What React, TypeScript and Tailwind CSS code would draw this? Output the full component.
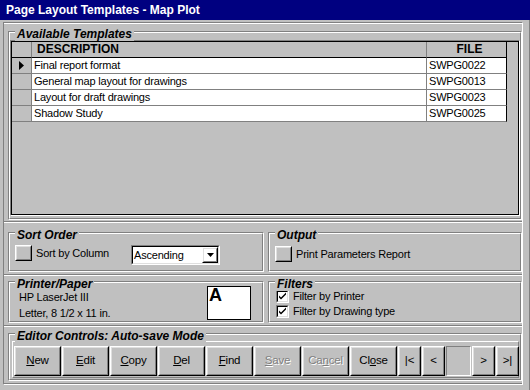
import React from "react";

const etchOuter = "border border-t-[#808080] border-l-[#808080] border-r-white border-b-white";
const etchInner = "border border-t-white border-l-white border-r-[#808080] border-b-[#808080]";
const raisedOuter = "border border-t-white border-l-white border-r-black border-b-black";
const raisedInner = "border border-t-[#dfdfdf] border-l-[#dfdfdf] border-r-[#808080] border-b-[#808080]";
const sunkOuter = "border border-t-[#808080] border-l-[#808080] border-r-white border-b-white";
const sunkInner = "border border-t-black border-l-black border-r-[#dfdfdf] border-b-[#dfdfdf]";

function Group({ label, className = "", children }: { label: string; className?: string; children?: React.ReactNode }) {
  return (
    <div className={`relative ${etchOuter} ${className}`}>
      <div className={`h-full ${etchInner}`}>{children}</div>
      <span className="absolute left-[6px] -top-[5px] bg-[#c0c0c0] px-[2px] text-[12px] leading-[14px] font-bold italic tracking-normal whitespace-nowrap">
        {label}
      </span>
    </div>
  );
}

function SquareButton() {
  return (
    <div className={`w-[17px] h-[16px] shrink-0 ${raisedOuter}`}>
      <div className={`h-full ${raisedInner}`} />
    </div>
  );
}

function CheckBox() {
  return (
    <div className={`w-[13px] h-[13px] shrink-0 ${sunkOuter}`}>
      <div className={`h-full bg-white ${sunkInner} flex items-center justify-center`}>
        <svg width="9" height="9" viewBox="0 0 9 9">
          <path d="M1 3.5 L1 5.5 L3 7.5 L8 2.5 L8 0.5 L3 5.5 Z" fill="black" />
        </svg>
      </div>
    </div>
  );
}

function Btn({ children, w = "w-[47px]", disabled = false }: { children: React.ReactNode; w?: string; disabled?: boolean }) {
  return (
    <div className={`${w} h-[30px] shrink-0 ${raisedOuter}`}>
      <div
        className={`h-full ${raisedInner} flex items-center justify-center text-[11.5px] ${
          disabled ? "text-[#808080] [text-shadow:1px_1px_0_#fff]" : "text-black"
        }`}
      >
        {children}
      </div>
    </div>
  );
}

const rows = [
  ["Final report format", "SWPG0022"],
  ["General map layout for drawings", "SWPG0013"],
  ["Layout for draft drawings", "SWPG0023"],
  ["Shadow Study", "SWPG0025"],
];

export default function App() {
  return (
    <div className="w-[530px] h-[390px] bg-[#c0c0c0] flex flex-col overflow-hidden font-['Liberation_Sans',Arial,sans-serif] text-[11px] text-black tracking-[-0.2px]">
      <div className="h-[20px] shrink-0 bg-[#000080] text-white font-bold text-[12px] tracking-normal flex items-center pl-[6px]">
        Page Layout Templates - Map Plot
      </div>
      <div className="flex-1 flex flex-col pt-[2px] pl-[3px] pr-[6px] pb-[5px] border-r border-r-[#808080]">
        <div className="flex-1 flex flex-col border border-t-[#808080] border-l-[#808080] border-r-white border-b-white">
          {/* Section 1 */}
          <div className="h-[199px] shrink-0 border-t border-t-white border-b border-b-[#808080] pl-[4px] flex flex-col">
            <Group label="Available Templates" className="mt-[7px] h-[189px]">
              <div className={`mt-[7px] h-[176px] ${sunkOuter}`}>
                <div className="h-full border border-black bg-[#c0c0c0] flex flex-col">
                  <div className="flex h-[16px] shrink-0">
                    <div className="w-[20px] border-r border-r-[#808080] border-b border-b-black" />
                    <div className="w-[395px] border-r border-r-[#808080] border-b border-b-black pl-[5px] font-bold text-[12px] tracking-normal leading-[15px]">
                      DESCRIPTION
                    </div>
                    <div className="w-[80px] border-r border-r-black border-b border-b-black text-center pl-[6px] font-bold text-[12px] tracking-normal leading-[15px]">
                      FILE
                    </div>
                  </div>
                  {rows.map(([d, f], i) => (
                    <div key={f} className="flex h-[16px] shrink-0">
                      <div className="w-[20px] border-r border-r-[#808080] border-b border-b-[#808080] flex items-center justify-center">
                        {i === 0 && (
                          <svg width="5" height="9" viewBox="0 0 5 9">
                            <path d="M0 0 L5 4.5 L0 9 Z" fill="black" />
                          </svg>
                        )}
                      </div>
                      <div className="w-[395px] bg-white border-r border-r-[#808080] border-b border-b-[#808080] pl-[2px] leading-[15px] whitespace-nowrap">
                        {d}
                      </div>
                      <div className="w-[80px] bg-white border-r border-r-black border-b border-b-[#808080] pl-[2px] leading-[15px]">
                        {f}
                      </div>
                    </div>
                  ))}
                </div>
              </div>
            </Group>
          </div>

          {/* Section 2 */}
          <div className="h-[53px] shrink-0 border-t border-t-white border-b border-b-[#808080] pl-[4px] flex gap-[4px]">
            <Group label="Sort Order" className="mt-[9px] h-[40px] w-[256px]">
              <div className="flex items-start pl-[5px] pt-[11px]">
                <SquareButton />
                <div className="w-[99px] pl-[4px] leading-[16px] h-[16px] shrink-0">Sort by Column</div>
                <div className={`w-[89px] h-[20px] shrink-0 ${sunkOuter}`}>
                  <div className={`h-full bg-white ${sunkInner} flex`}>
                    <div className="flex-1 pl-[1px] leading-[16px]">Ascending</div>
                    <div className={`w-[16px] h-[16px] ${raisedOuter}`}>
                      <div className={`h-full ${raisedInner} flex items-center justify-center`}>
                        <svg width="7" height="4" viewBox="0 0 7 4">
                          <path d="M0 0 L7 0 L3.5 4 Z" fill="black" />
                        </svg>
                      </div>
                    </div>
                  </div>
                </div>
              </div>
            </Group>
            <Group label="Output" className="mt-[9px] h-[40px] flex-1">
              <div className="flex items-center pl-[5px] pt-[12px]">
                <SquareButton />
                <div className="pl-[4px] leading-[16px]">Print Parameters Report</div>
              </div>
            </Group>
          </div>

          {/* Section 3 */}
          <div className="h-[51px] shrink-0 border-t border-t-white border-b border-b-[#808080] pl-[4px] flex gap-[4px]">
            <Group label="Printer/Paper" className="mt-[5px] h-[42px] w-[256px]">
              <div className="flex justify-between pl-[9px] pr-[11px]">
                <div className="pt-[6px] leading-[16px]">
                  <div>HP LaserJet III</div>
                  <div>Letter, 8 1/2 x 11 in.</div>
                </div>
                <div className="mt-[3px] w-[44px] h-[34px] bg-white border border-black pl-[1px]">
                  <div className="font-bold text-[18px] leading-[18px] tracking-normal -mt-[1px]">A</div>
                </div>
              </div>
            </Group>
            <Group label="Filters" className="mt-[5px] h-[42px] flex-1">
              <div className="flex flex-col gap-[2px] pl-[6px] pt-[7px]">
                <div className="flex items-center h-[13px]">
                  <CheckBox />
                  <div className="pl-[4px] leading-[15px]">Filter by Printer</div>
                </div>
                <div className="flex items-center h-[13px]">
                  <CheckBox />
                  <div className="pl-[4px] leading-[15px]">Filter by Drawing type</div>
                </div>
              </div>
            </Group>
          </div>

          {/* Section 4 */}
          <div className="h-[58px] shrink-0 border-t border-t-white border-b border-b-[#808080] pl-[4px] flex flex-col">
            <Group label="Editor Controls: Auto-save Mode" className="mt-[6px] h-[48px]">
              <div className="ml-[2px] mr-[1px] mt-[6px] h-[37px] border border-t-white border-l-white border-r-[#808080] border-b-[#808080] pl-[1px] pt-[4px] flex gap-[1px]">
                <Btn><span className="underline">N</span>ew</Btn>
                <Btn><span className="underline">E</span>dit</Btn>
                <Btn><span className="underline">C</span>opy</Btn>
                <Btn><span className="underline">D</span>el</Btn>
                <Btn><span className="underline">F</span>ind</Btn>
                <Btn disabled><span className="underline">S</span>ave</Btn>
                <Btn disabled>Ca<span className="underline">n</span>cel</Btn>
                <Btn>Cl<span className="underline">o</span>se</Btn>
                <Btn w="w-[23px]">|&lt;</Btn>
                <Btn w="w-[23px]">&lt;</Btn>
                <div className="w-[25px] h-[30px] shrink-0 border border-t-[#808080] border-l-[#808080] border-r-white border-b-white" />
                <Btn w="w-[23px]">&gt;</Btn>
                <Btn w="w-[23px]">&gt;|</Btn>
              </div>
            </Group>
          </div>
        </div>
      </div>
    </div>
  );
}
